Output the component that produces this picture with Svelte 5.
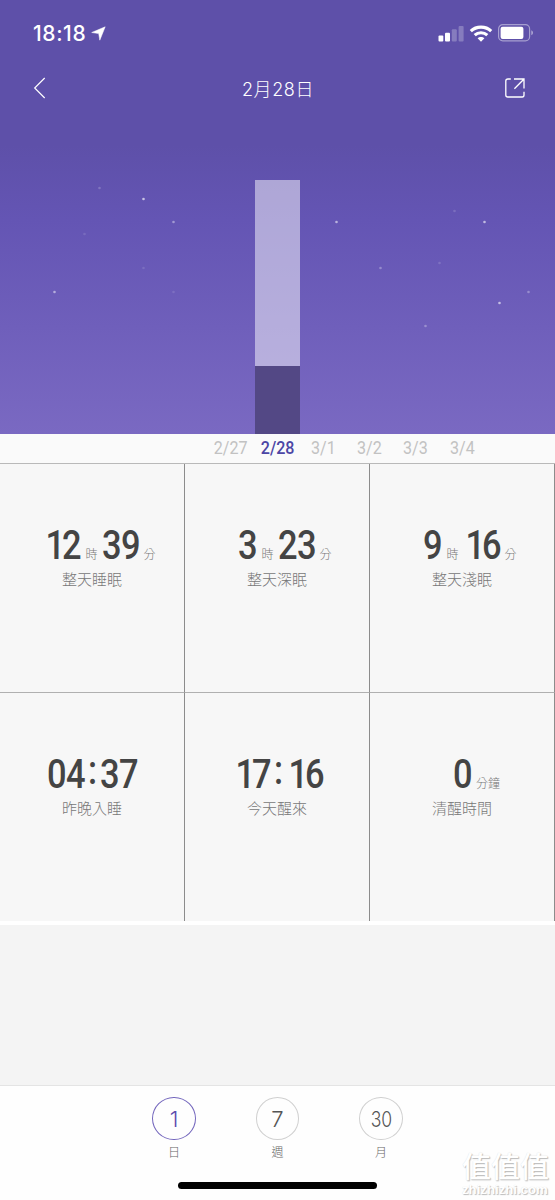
<script lang="ts">
	type Part = { num?: string; unit?: string };

	const bar = { light: 186, deep: 68 };

	// x, y, opacity
	const stars = [
		[99, 188, 0.2],
		[143, 199, 0.65],
		[173, 222, 0.4],
		[84, 234, 0.12],
		[143, 268, 0.12],
		[54, 292, 0.5],
		[173, 292, 0.12],
		[336, 222, 0.55],
		[380, 268, 0.3],
		[454, 211, 0.15],
		[484, 222, 0.6],
		[439, 263, 0.15],
		[528, 292, 0.3],
		[499, 303, 0.6],
		[425, 326, 0.3]
	];

	const dates = ['2/27', '2/28', '3/1', '3/2', '3/3', '3/4'];
	const selected = '2/28';

	const stats: { parts: Part[]; label: string; shift: number }[] = [
		{ parts: [{ num: '12' }, { unit: '時' }, { num: '39' }, { unit: '分' }], label: '整天睡眠', shift: 15 },
		{ parts: [{ num: '3' }, { unit: '時' }, { num: '23' }, { unit: '分' }], label: '整天深眠', shift: 16 },
		{ parts: [{ num: '9' }, { unit: '時' }, { num: '16' }, { unit: '分' }], label: '整天淺眠', shift: 16 },
		{ parts: [{ num: '04:37' }], label: '昨晚入睡', shift: 0 },
		{ parts: [{ num: '17:16' }], label: '今天醒來', shift: 2 },
		{ parts: [{ num: '0' }, { unit: '分鐘' }], label: '清醒時間', shift: 29 }
	];

	const tabs = [
		{ num: '1', label: '日' },
		{ num: '7', label: '週' },
		{ num: '30', label: '月' }
	];

	const DIGIT = 19;
	const COLON = 15;
	const SQUEEZE = 0.83;

	function widthOf(text: string) {
		return [...text].reduce((sum, c) => sum + (c === ':' ? COLON : DIGIT), 0);
	}

	// per-glyph x positions, in the squeezed coordinate system
	function xs(text: string) {
		let x = 0;
		return [...text]
			.map((c) => {
				const at = c === ':' ? x + 3 : c === '1' ? x + 2.4 : x;
				x += c === ':' ? COLON : DIGIT;
				return (at / SQUEEZE).toFixed(2);
			})
			.join(' ');
	}

	// the colon sits centred on the digit height
	function ys(text: string) {
		return [...text].map((c) => (c === ':' ? 26 : 29.5)).join(' ');
	}
</script>

<div class="screen">
	<section class="hero">
		<div class="status">
			<div class="clock">
				<span class="time">18:18</span>
				<svg width="15" height="15" viewBox="0 0 14 15"><path d="M13.7.8 8.3 14.2 7.2 7.6.2 6.5z" fill="#fff" stroke="#fff" stroke-width=".5" stroke-linejoin="round" /></svg>
			</div>
			<div class="indicators">
				<svg width="26" height="17" viewBox="0 0 26 17" fill="#fff">
					<rect x="0.5" y="10.5" width="4.8" height="6" rx="1" />
					<rect x="7" y="7.8" width="5" height="8.7" rx="1" />
					<rect x="13.8" y="4.2" width="5" height="12.3" rx="1" opacity=".25" />
					<rect x="20.6" y="1" width="5" height="15.5" rx="1" opacity=".25" />
				</svg>
				<svg width="24" height="17" viewBox="0 0 24 17" fill="none" stroke="#fff" stroke-width="3.1">
					<path d="M1.8 6.2C7.4.8 16.6.8 22.2 6.2" />
					<path d="M5.7 10.2C9.2 6.9 14.8 6.9 18.3 10.2" />
					<path d="M12 16.7 8.6 13.3C10.3 11.4 13.7 11.4 15.4 13.3z" fill="#fff" stroke="none" />
				</svg>
				<svg width="36" height="18" viewBox="0 0 36 18">
					<rect x="0.6" y="0.7" width="31" height="16.2" rx="4.2" fill="none" stroke="#fff" stroke-opacity=".45" stroke-width="1.2" />
					<rect x="2.6" y="2.7" width="22.8" height="12.2" rx="2" fill="#fff" />
					<path d="M33.3 6.3c2.2 1 2.2 4 0 5z" fill="#fff" opacity=".5" />
				</svg>
			</div>
		</div>

		<header>
			<svg width="14" height="22" viewBox="0 0 14 22" fill="none" stroke="#fff" stroke-width="1.2"><path d="M12.7 1 2.7 11l10 10" /></svg>
			<h1>2月28日</h1>
			<svg width="20" height="20" viewBox="0 0 20 20" fill="none" stroke="#fff" stroke-width="1.3">
				<path d="M5.8 1H3Q.8 1 .8 3v14q0 2 2 2h14.4q1.8 0 1.8-2v-3.3" />
				<path d="M9 1h10v9.5M18.8 1.2 9.4 10.8" />
			</svg>
		</header>

		<svg class="stars" width="555" height="434" viewBox="0 0 555 434">
			{#each stars as [x, y, opacity]}
				<circle cx={x + 0.5} cy={y} r="1.3" fill="#fff" {opacity} />
			{/each}
		</svg>

		<div class="bar">
			<div class="light" style="height: {bar.light}px"></div>
			<div class="deep" style="height: {bar.deep}px"></div>
		</div>
	</section>

	<nav class="dates">
		{#each dates as date (date)}
			<span class:active={date === selected}><b>{date}</b></span>
		{/each}
	</nav>

	<section class="grid">
		{#each stats as stat (stat.label)}
			<div class="cell">
				<div class="value" style="margin-left: {stat.shift}px">
					{#each stat.parts as part}
						{#if part.num}
							<svg class="num" width={widthOf(part.num)} height="32">
								<text x={xs(part.num)} y={ys(part.num)} transform="scale({SQUEEZE} 1)">{part.num}</text>
							</svg>
						{:else}
							<span class="unit">{part.unit}</span>
						{/if}
					{/each}
				</div>
				<div class="label">{stat.label}</div>
			</div>
		{/each}
	</section>

	<div class="spacer"></div>

	<footer>
		<div class="tabs">
			{#each tabs as tab, i (tab.label)}
				<div class="tab" class:current={i === 0}>
					<div class="circle"><span class:wide={tab.num.length > 1}>{tab.num}</span></div>
					<div class="tab-label">{tab.label}</div>
				</div>
			{/each}
		</div>
		<div class="home"></div>
		<div class="watermark">
			<div class="mark">值值值</div>
			<div class="site">zhizhizhi.com</div>
		</div>
	</footer>
</div>

<style>
	:global(body) {
		background: #f4f4f4;
	}

	.screen {
		width: 555px;
		height: 1200px;
		display: flex;
		flex-direction: column;
		overflow: hidden;
		font-family: 'Noto Sans CJK TC', sans-serif;
	}

	svg {
		display: block;
	}

	.hero {
		position: relative;
		height: 434px;
		box-sizing: border-box;
		display: flex;
		flex-direction: column;
		background: linear-gradient(#5e50a9 0, #5e50a9 145px, #6455b4 220px, #7a69c2 434px);
	}

	.status {
		display: flex;
		justify-content: space-between;
		align-items: center;
		height: 34px;
		padding: 16px 21.5px 0 33px;
	}

	.clock,
	.indicators {
		display: flex;
		align-items: center;
	}

	.clock {
		gap: 5px;
		padding-top: 1px;
	}

	.time {
		font: 500 21px/34px Inter, sans-serif;
		letter-spacing: 0.6px;
		color: #fff;
	}

	.indicators {
		gap: 5px;
	}

	header {
		display: flex;
		justify-content: space-between;
		align-items: center;
		height: 76px;
		padding: 0 30px 0 32px;
	}

	h1 {
		margin: 0 0 0 5px;
		font-family: Inter, 'Noto Sans CJK TC', sans-serif;
		font-size: 18px;
		font-weight: 300;
		letter-spacing: 0.6px;
		color: #fff;
	}

	.stars {
		position: absolute;
		inset: 0;
	}

	.bar {
		width: 45px;
		margin: auto auto 0;
	}

	.light {
		background: rgba(255, 255, 255, 0.49);
	}

	.deep {
		background: #534885;
	}

	.dates {
		height: 29px;
		display: flex;
		padding-left: 208px;
		background: #fafafa;
		border-bottom: 1px solid #b9b9b9;
	}

	.dates span {
		width: 46.2px;
		display: flex;
		justify-content: center;
		font: 18.7px/29px Roboto, sans-serif;
		color: #c2c2c2;
	}

	.dates b {
		font-weight: 400;
		transform: scaleX(0.86);
	}

	.dates .active {
		color: #4c46a5;
	}

	.dates .active b {
		font-weight: 500;
	}

	.grid {
		display: grid;
		grid-template-columns: repeat(3, 185px);
		grid-template-rows: 229px 228px;
		background: #f7f7f7;
	}

	.cell {
		display: flex;
		flex-direction: column;
		align-items: center;
		box-sizing: border-box;
		padding-top: 65px;
		border-right: 1px solid #8c8c8c;
	}

	.cell:nth-child(-n + 3) {
		border-bottom: 1px solid #b0b0b0;
	}

	.value {
		display: flex;
		align-items: flex-end;
		gap: 4px;
		height: 32px;
	}

	.num {
		overflow: visible;
	}

	.num text {
		font: 500 41.5px Roboto, sans-serif;
		fill: #444;
	}

	.unit {
		font-size: 12px;
		font-weight: 300;
		line-height: 14px;
		color: #777;
	}

	.label {
		margin-top: 7px;
		font-size: 15px;
		font-weight: 300;
		line-height: 22px;
		color: #777;
	}

	.spacer {
		flex: 1;
		background: #f4f4f4;
		border-top: 4px solid #fff;
	}

	footer {
		position: relative;
		height: 114px;
		background: #fefefe;
		border-top: 1px solid #e4e4e4;
	}

	.tabs {
		display: flex;
		justify-content: center;
		gap: 60px;
		padding-top: 11px;
	}

	.tab {
		width: 43.5px;
	}

	.circle {
		height: 43px;
		box-sizing: border-box;
		display: flex;
		align-items: center;
		justify-content: center;
		border: 1px solid #d0d0d0;
		border-radius: 50%;
		font: 300 22px Inter, sans-serif;
		color: #555;
	}

	.circle .wide {
		transform: scaleX(0.8);
	}

	.current .circle {
		border-color: #7467bd;
		color: #5b4cae;
	}

	.tab-label {
		margin-top: 3px;
		font-size: 12px;
		font-weight: 300;
		line-height: 18px;
		text-align: center;
		color: #666;
	}

	.home {
		width: 199px;
		height: 7px;
		margin: 21px auto 0;
		border-radius: 4px;
		background: #000;
	}

	.watermark {
		position: absolute;
		right: 5px;
		top: 65px;
		width: 88px;
		color: #fff;
		text-shadow: 1px 1px 1px #bbb, 0 0 1px #ddd;
		white-space: nowrap;
	}

	.mark {
		font-size: 29px;
		font-weight: 500;
		line-height: 28px;
	}

	.site {
		margin-top: 3px;
		font: 700 13.2px/16px 'Liberation Sans', sans-serif;
	}
</style>
